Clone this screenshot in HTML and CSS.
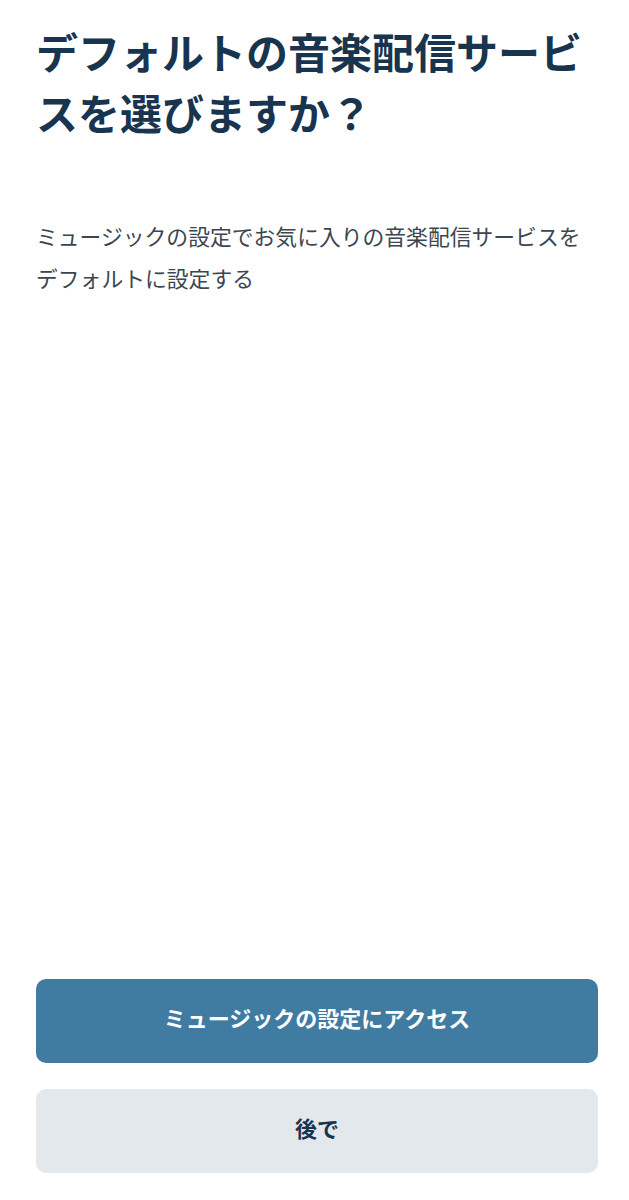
FILE: index.html
```html
<!DOCTYPE HTML>
<html lang="ja">
<head>
<meta charset="utf-8">
<title>デフォルトの音楽配信サービス</title>
<link rel="stylesheet" href="styles.css">
</head>
<body>
<div class="page">
	<h1 class="title">デフォルトの音楽配信サービスを選びますか？</h1>
	<p class="desc">ミュージックの設定でお気に入りの音楽配信サービスをデフォルトに設定する</p>
	<div class="actions">
		<button type="button" class="btn btn-primary">ミュージックの設定にアクセス</button>
		<button type="button" class="btn btn-later">後で</button>
	</div>
</div>
</body>
</html>
```

FILE: styles.css
```css
html, body { margin:0; padding:0; background:#fff;}
body { font-family:"Noto Sans CJK JP", "Noto Sans", sans-serif; color:#18344e;}
.page { min-height:1200px; box-sizing:border-box; padding:20px 31px 27px 36px; display:flex; flex-direction:column;}
.title { margin:0; font-size:42px; line-height:61px; font-weight:700; color:#18344e;}
.desc { margin:73px 0 0; max-width:552px; font-size:21.8px; line-height:42px; color:#3b4651; font-weight:400;}
.actions { margin-top:auto; display:flex; flex-direction:column; gap:26px;}
.btn { display:block; width:100%; height:84px; padding:0 0 8px; border:0; border-radius:10px; font-family:inherit; font-size:22px; font-weight:700; cursor:pointer;}
.btn-primary { background:#407ca2; color:#fff;}
.btn-later { background:#e3e8ed; color:#18344e;}
```
